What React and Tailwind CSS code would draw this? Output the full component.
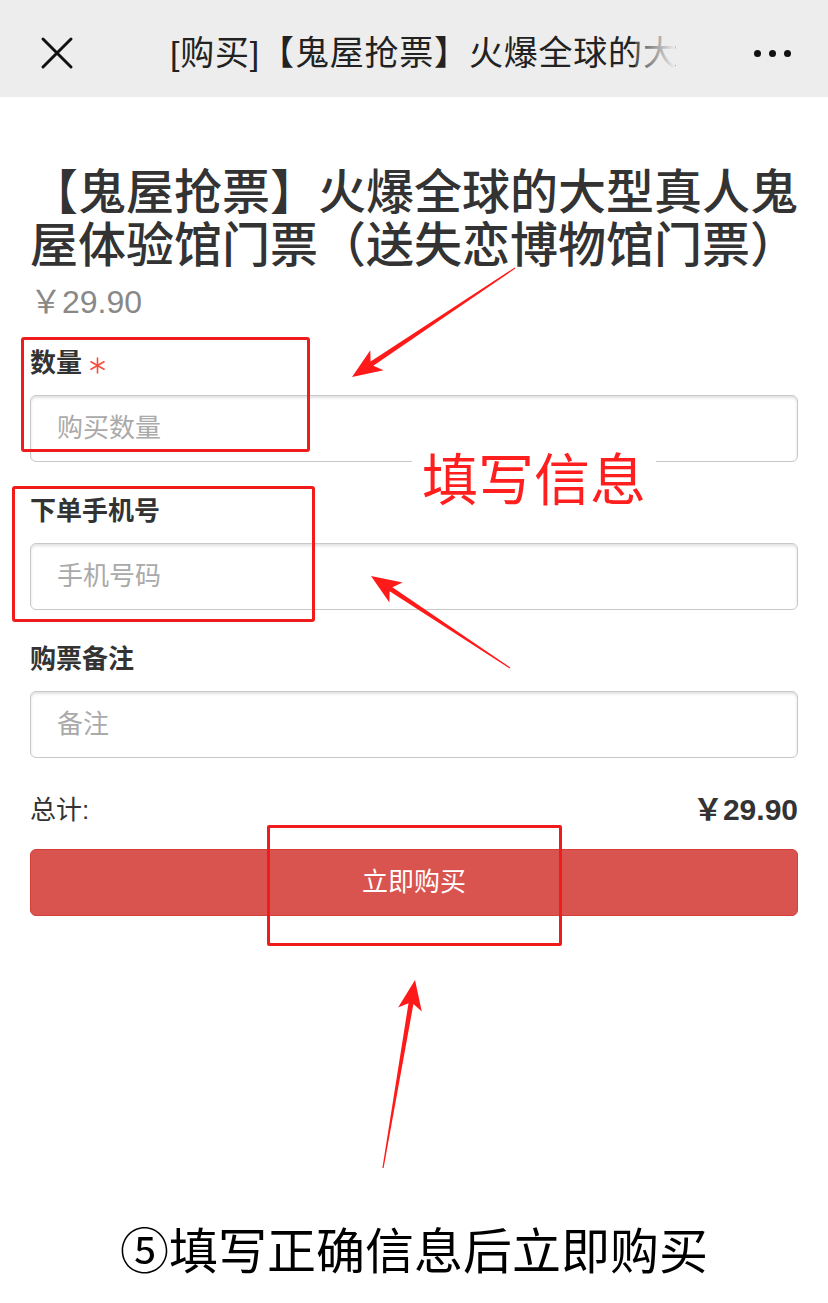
import React from "react";

// tapered annotation arrow: thin at the tail, wide at the head
function arrowPoints(tail, tip, headLen = 30, headHalf = 12, neck = 5) {
  const dx = tip[0] - tail[0];
  const dy = tip[1] - tail[1];
  const len = Math.hypot(dx, dy);
  const ux = dx / len;
  const uy = dy / len;
  const nx = -uy;
  const ny = ux;
  const bx = tip[0] - ux * headLen;
  const by = tip[1] - uy * headLen;
  const nb = tip[0] - ux * (headLen - 6);
  const nby = tip[1] - uy * (headLen - 6);
  const pts = [
    [tail[0] + nx * 0.6, tail[1] + ny * 0.6],
    [nb + nx * (neck / 2), nby + ny * (neck / 2)],
    [bx + nx * headHalf, by + ny * headHalf],
    tip,
    [bx - nx * headHalf, by - ny * headHalf],
    [nb - nx * (neck / 2), nby - ny * (neck / 2)],
    [tail[0] - nx * 0.6, tail[1] - ny * 0.6],
  ];
  return pts.map((p) => p.map((v) => v.toFixed(1)).join(",")).join(" ");
}

const arrows = [
  { tail: [515, 268], tip: [352, 377] },
  { tail: [510, 668], tip: [371, 576] },
  { tail: [383, 1168], tip: [415, 980] },
];

function Star() {
  return (
    <svg width="17" height="17" viewBox="0 0 17 17" className="ml-[7px] mt-[4px]">
      <path
        d="M8.5 1 V16 M2 4.75 L15 12.25 M15 4.75 L2 12.25"
        stroke="#fa4b3c"
        strokeWidth="1.6"
        strokeLinecap="round"
      />
    </svg>
  );
}

function Field({ label, placeholder, required }) {
  return (
    <div>
      <div className="flex h-[36px] items-center text-[26px] font-bold text-[#333]">
        {label}
        {required && <Star />}
      </div>
      <input
        placeholder={placeholder}
        className="mt-[14px] block h-[67px] w-full rounded-[6px] border border-[#c8c8c8] bg-white pl-[26px] text-[26px] text-[#333] shadow-[inset_0_2px_3px_rgba(0,0,0,0.12)] outline-none placeholder:text-[#aaa]"
      />
    </div>
  );
}

export default function App() {
  return (
    <div className="relative mx-auto h-[1303px] w-[828px] overflow-hidden bg-white font-['Liberation_Sans','Noto_Sans_CJK_SC',sans-serif]">
      {/* header bar */}
      <div className="flex h-[97px] items-center bg-[#ededed] pl-[40px] pr-[37px] pt-[9px]">
        <svg width="34" height="34" viewBox="0 0 34 34" className="shrink-0">
          <path d="M3 3 L31 31 M31 3 L3 31" stroke="#111" strokeWidth="3" strokeLinecap="round" />
        </svg>
        <div className="relative ml-[96px] w-[505px] whitespace-nowrap text-[34px] leading-[44px] tracking-[0.8px] text-[#222]">
          [购买]【鬼屋抢票】火爆全球的大
          <div className="absolute inset-y-0 right-0 w-[40px] bg-gradient-to-r from-[#ededed]/20 to-[#ededed]" />
        </div>
        <div className="ml-auto flex gap-[8px]">
          <span className="h-[7px] w-[7px] rounded-full bg-[#111]" />
          <span className="h-[7px] w-[7px] rounded-full bg-[#111]" />
          <span className="h-[7px] w-[7px] rounded-full bg-[#111]" />
        </div>
      </div>

      <div className="px-[30px]">
        <h1 className="mt-[69px] text-[48px] font-medium leading-[53px] text-[#333]">
          <span className="block whitespace-nowrap">【鬼屋抢票】火爆全球的大型真人鬼</span>
          <span className="block whitespace-nowrap">屋体验馆门票（送失恋博物馆门票）</span>
        </h1>
        <div className="mt-[10px] text-[32px] leading-[40px] text-[#888]">￥29.90</div>

        <div className="mt-[23px] flex flex-col gap-[31px]">
          <Field label="数量" placeholder="购买数量" required />
          <Field label="下单手机号" placeholder="手机号码" />
          <Field label="购票备注" placeholder="备注" />
        </div>

        <div className="mt-[34px] flex items-center justify-between leading-[36px]">
          <span className="text-[26px] text-[#333]">总计:</span>
          <span className="text-[30px] font-bold text-[#333]">￥29.90</span>
        </div>

        <button className="mt-[21px] flex h-[67px] w-full items-center justify-center rounded-[6px] border border-[#d43f3a] bg-[#d9534f] text-[26px] text-white">
          立即购买
        </button>

        <div className="mt-[308px] text-center text-[49px] leading-[56px] text-black">
          ⑤填写正确信息后立即购买
        </div>
      </div>

      {/* annotations */}
      <div className="absolute left-[21px] top-[337px] h-[115px] w-[289px] rounded-[3px] border-[3px] border-[#f01c1c]" />
      <div className="absolute left-[12px] top-[486px] h-[136px] w-[303px] rounded-[3px] border-[3px] border-[#f01c1c]" />
      <div className="absolute left-[267px] top-[825px] h-[121px] w-[295px] rounded-[2px] border-[3px] border-[#f01c1c]" />
      <div className="absolute left-[412px] top-[450px] flex h-[62px] w-[244px] items-center justify-center bg-white text-[56px] leading-[56px] text-[#ff1f1f]">
        填写信息
      </div>
      <svg className="pointer-events-none absolute left-0 top-0" width="828" height="1303">
        {arrows.map((a, i) => (
          <polygon key={i} points={arrowPoints(a.tail, a.tip)} fill="#ff1a1a" />
        ))}
      </svg>
    </div>
  );
}
